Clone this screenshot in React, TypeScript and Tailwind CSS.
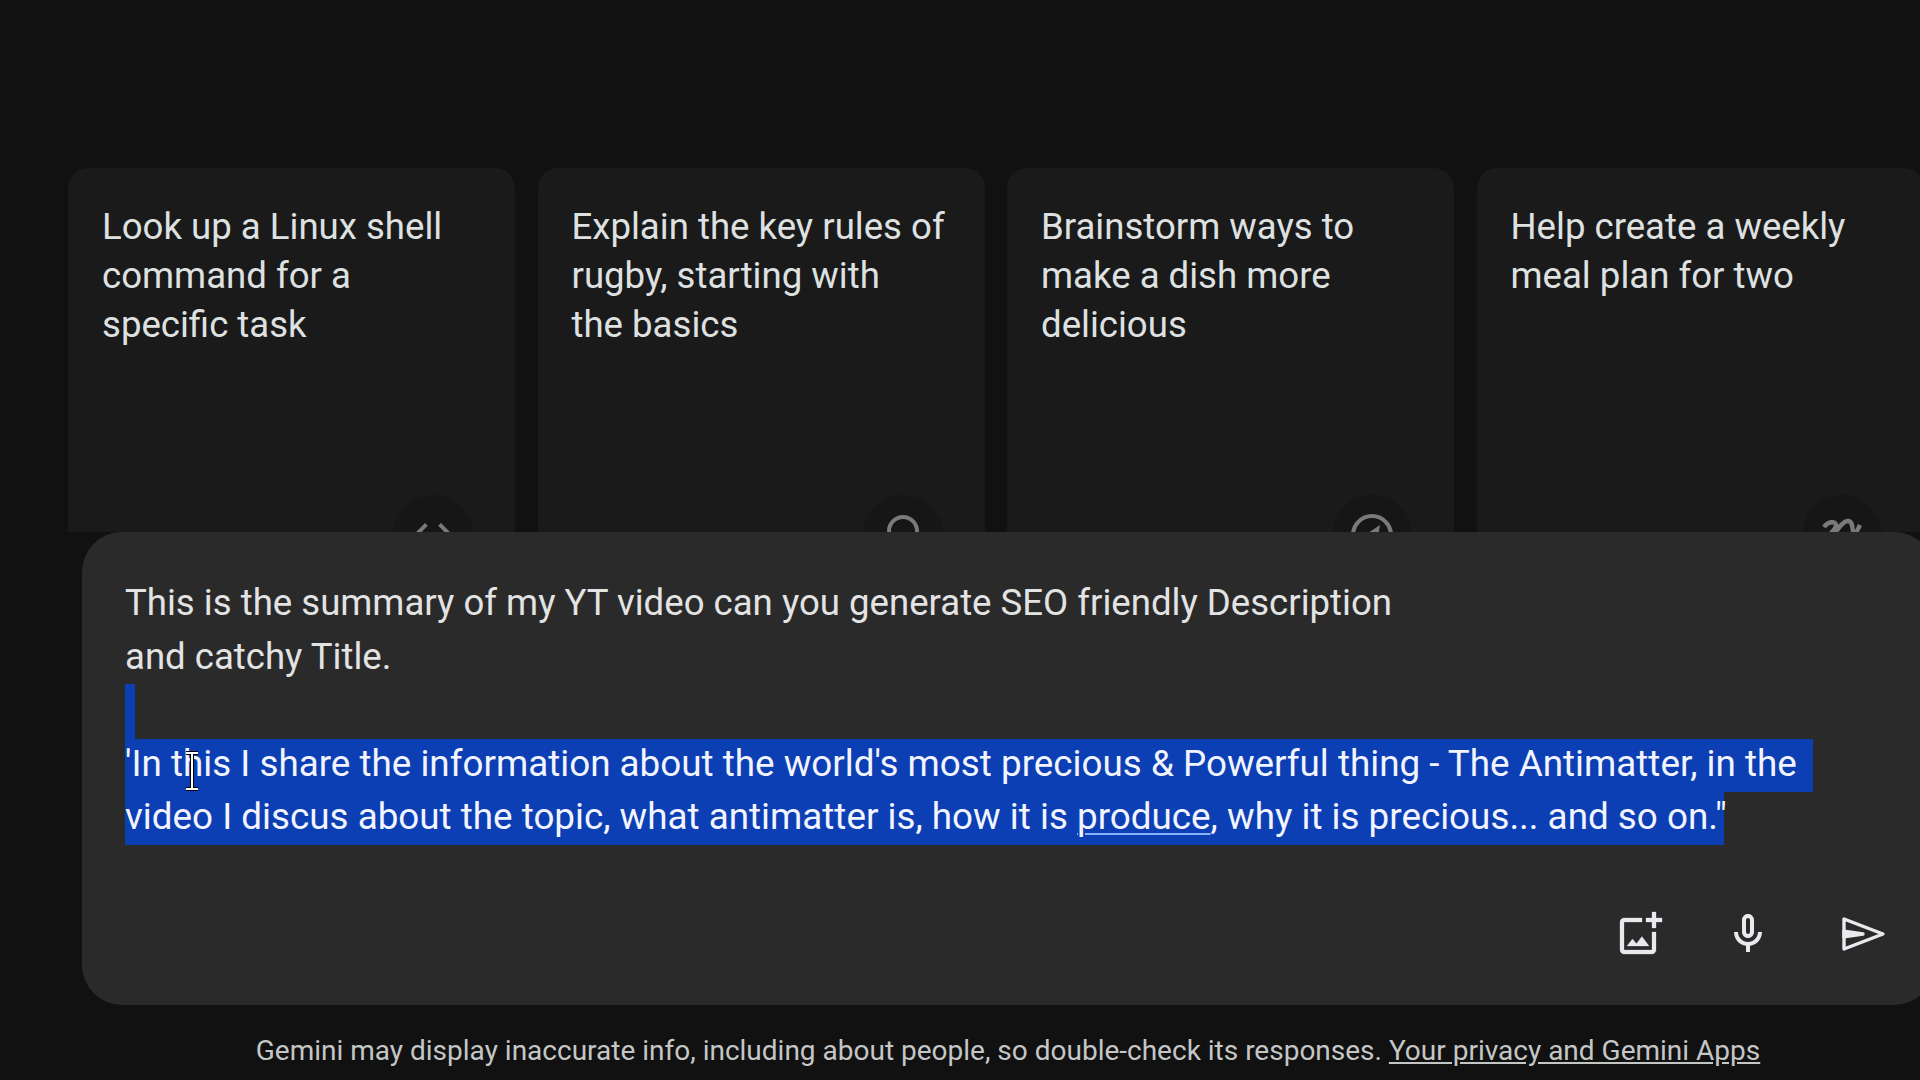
const cards = [
  { text: "Look up a Linux shell\ncommand for a\nspecific task", icon: "code" },
  { text: "Explain the key rules of\nrugby, starting with\nthe basics", icon: "search" },
  { text: "Brainstorm ways to\nmake a dish more\ndelicious", icon: "compass" },
  { text: "Help create a weekly\nmeal plan for two", icon: "edit" },
];

const CardIcon = ({ name }: { name: string }) => {
  if (name === "code") {
    return (
      <svg viewBox="0 0 24 24" className="w-12 h-12" fill="currentColor">
        <path d="M9.4 16.6 4.8 12l4.6-4.6L8 6l-6 6 6 6 1.4-1.4zm5.2 0 4.6-4.6-4.6-4.6L16 6l6 6-6 6-1.4-1.4z" />
      </svg>
    );
  }
  if (name === "search") {
    return (
      <svg viewBox="0 0 24 24" className="w-12 h-12" fill="none" stroke="currentColor" strokeWidth="2">
        <circle cx="12" cy="10" r="7" />
      </svg>
    );
  }
  if (name === "compass") {
    return (
      <svg viewBox="0 0 24 24" className="w-12 h-12" fill="none" stroke="currentColor" strokeWidth="2">
        <circle cx="12" cy="12" r="9.5" />
        <path d="m16 7-6 4-1 6 6-4z" fill="currentColor" stroke="none" />
      </svg>
    );
  }
  return (
    <svg viewBox="0 0 24 24" className="w-12 h-12" fill="none" stroke="currentColor" strokeWidth="2.2">
      <path d="M3 8c2-3 6-3 6-1 0 3-5 5-4 7 2 1 6-9 10-9 3 0 2 6 3 8l3-6" />
    </svg>
  );
};

const App = () => {
  return (
    <div className="w-[1920px] h-[1080px] overflow-hidden bg-[#111112] pt-[168px] pl-[68px] font-['Roboto',sans-serif]">
      <div className="w-[1880px]">
        <div className="flex gap-[22.5px] h-[364px] overflow-hidden">
          {cards.map((card) => (
            <div
              key={card.text}
              className="w-[447px] h-[420px] shrink-0 rounded-t-[20px] bg-[#1a1a1b] pt-[34px] px-[34px] relative"
            >
              <p className="text-[36.6px] leading-[49px] text-[#dfe1e1] whitespace-pre-line">{card.text}</p>
              <div className="absolute left-[325px] top-[327px] w-20 h-20 rounded-full bg-[#161617] flex items-center justify-center text-[#7a7a7a]">
                <CardIcon name={card.icon} />
              </div>
            </div>
          ))}
        </div>

        <div className="ml-[14px] w-[1852px] h-[473px] rounded-[40px] bg-[#2a2a2b] pt-[44px] pl-[43px] flex flex-col">
          <p className="w-[1300px] text-[36.6px] leading-[54px] text-[#e3e3e3]">
            This is the summary of my YT video can you generate SEO friendly Description and catchy Title.
          </p>
          <div className="relative text-[36.8px] text-[#f2f4ff] whitespace-nowrap">
            <div className="w-[10px] h-[55px] bg-[#0c3fb4]" />
            <div className="w-[1688px] leading-[50px] pb-[3px] bg-[#0c3fb4]">
              'In this I share the information about the world's most precious &amp; Powerful thing - The Antimatter, in the
            </div>
            <div className="w-[1599px] leading-[50px] pb-[3px] bg-[#0c3fb4]">
              video I discus about the topic, what antimatter is, how it is{" "}
              <span className="underline decoration-[#8ab4f8] decoration-2 underline-offset-4">produce</span>, why it is
              precious... and so on."
            </div>
            <svg viewBox="0 0 16 40" className="absolute left-[59px] top-[67px] w-4 h-10" fill="none">
              <path d="M2 2h12M2 38h12M8 2v36" stroke="#000" strokeWidth="4" />
              <path d="M2 2h12M2 38h12M8 2v36" stroke="#fff" strokeWidth="2" />
            </svg>
          </div>
          <div className="flex mt-[65px] ml-[1491px] text-[#e8eaed]">
            <svg viewBox="0 0 24 24" className="w-12 h-12" fill="currentColor" stroke="currentColor" strokeWidth="0.15">
              <path d="M18 20H4V6h9V4H4c-1.1 0-2 .9-2 2v14c0 1.1.9 2 2 2h14c1.1 0 2-.9 2-2v-9h-2v9zm-7.79-3.17-1.96-2.36L5.5 18h11l-3.54-4.71zM20 4V1h-2v3h-3c.01.01 0 2 0 2h3v2.99c.01.01 2 0 2 0V6h3V4h-3z" />
            </svg>
            <svg viewBox="0 0 24 24" className="w-12 h-12 ml-[60px]" fill="currentColor">
              <path d="M12 14c1.66 0 3-1.34 3-3V5c0-1.66-1.34-3-3-3S9 3.34 9 5v6c0 1.66 1.34 3 3 3zm-1-9c0-.55.45-1 1-1s1 .45 1 1v6c0 .55-.45 1-1 1s-1-.45-1-1V5zm6 6c0 2.76-2.24 5-5 5s-5-2.24-5-5H5c0 3.53 2.61 6.43 6 6.92V21h2v-3.08c3.39-.49 6-3.39 6-6.92h-2z" />
            </svg>
            <svg viewBox="0 0 24 24" className="w-12 h-12 ml-[66px]" fill="none" stroke="currentColor" strokeWidth="1.7" strokeLinejoin="round">
              <path d="M3 4.5 22.5 12 3 19.5z" />
              <path d="M3 10.6 12.5 12 3 13.4z" fill="currentColor" />
            </svg>
          </div>
        </div>

        <p className="ml-[14px] w-[1852px] mt-[30px] text-center text-[28px] leading-[32px] text-[#c4c7c5] whitespace-nowrap">
          Gemini may display inaccurate info, including about people, so double-check its responses.{" "}
          <span className="underline">Your privacy and Gemini Apps</span>
        </p>
      </div>
    </div>
  );
};

export default App;
